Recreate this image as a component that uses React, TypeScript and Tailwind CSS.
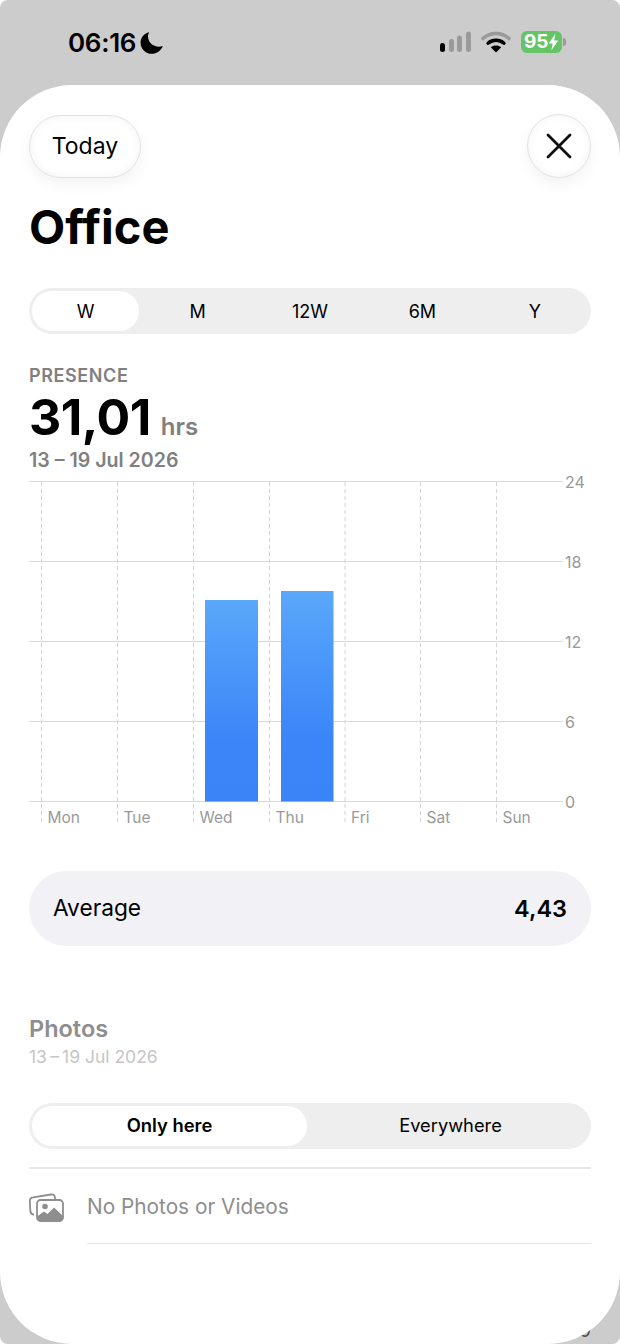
const ticks = [
  { y: 481.5, label: "24" },
  { y: 561.5, label: "18" },
  { y: 641.5, label: "12" },
  { y: 721.5, label: "6" },
  { y: 801.5, label: "0" },
];

const days = [
  { x: 41.5, label: "Mon" },
  { x: 117.5, label: "Tue" },
  { x: 193.5, label: "Wed" },
  { x: 269.5, label: "Thu" },
  { x: 345, label: "Fri" },
  { x: 420.5, label: "Sat" },
  { x: 496.5, label: "Sun" },
];

const ranges = ["W", "M", "12W", "6M", "Y"];

function StatusBar() {
  return (
    <div className="h-[85px] flex items-start justify-between pl-[68px] pr-[54px] pt-[27px]">
      <div className="flex items-center gap-[5px]">
        <span className="text-[26px] leading-[32px] font-semibold tracking-[-0.3px] text-black">06:16</span>
        <svg width="24" height="24" viewBox="0 0 24 24" className="-ml-[1px]">
          <path d="M9.2 1.2C3.9 2.4 0.6 6.6 0.6 11.7c0 6.2 5 11.1 11.2 11.1 4.9 0 9.2-3 11-7.8-1.2 0.5-2.5 0.7-3.9 0.7C12.900 15.700 8 11.200 8 5.600c0-1.600 0.400-3.100 1.200-4.400z" fill="#000" />
        </svg>
      </div>
      <div className="flex items-center gap-[10px] pt-[4px]">
        <svg width="32" height="22" viewBox="0 0 32 22">
          <rect x="1" y="12" width="5" height="9" rx="2.5" fill="#000" />
          <rect x="10" y="8" width="5" height="13" rx="2.5" fill="#9a9a9a" />
          <rect x="18" y="4.500" width="5" height="16.500" rx="2.5" fill="#9a9a9a" />
          <rect x="27" y="0.500" width="5" height="20.500" rx="2.5" fill="#9a9a9a" />
        </svg>
        <svg width="30" height="22" viewBox="0 0 30 22" fill="none">
          <path d="M2 7.500C9.500 0.800 20.500 0.800 28 7.500" stroke="#9a9a9a" strokeWidth="3.600" strokeLinecap="round" />
          <path d="M7 12.200C11.800 8.300 18.200 8.300 23 12.200" stroke="#000" strokeWidth="3.400" strokeLinecap="round" />
          <path d="M15 21.500L9.800 16.200C12.800 13.800 17.200 13.800 20.200 16.200z" fill="#000" />
        </svg>
        <div className="flex items-center gap-[1px]">
          <div className="w-[41px] h-[22px] rounded-[6px] bg-[#65c466] flex items-center pl-[3px] gap-0 overflow-hidden">
            <span className="text-[19px] leading-[22px] font-bold text-white tracking-[-0.2px]">95</span>
            <svg width="11" height="18" viewBox="0 0 11 18">
              <path d="M7.500 0.500L0.800 10.400h3.900L3.300 17.500 10.200 7.400H6.200z" fill="#fff" />
            </svg>
          </div>
          <div className="w-[3px] h-[8px] rounded-r-[3px] bg-[#9a9a9a]" />
        </div>
      </div>
    </div>
  );
}

function Chart() {
  return (
    <svg width="620" height="356" viewBox="0 470 620 356" className="block">
      <defs>
        <linearGradient id="bar" x1="0" y1="0" x2="0" y2="1">
          <stop offset="0" stopColor="#5aa7fb" />
          <stop offset="0.7" stopColor="#3b85f8" />
          <stop offset="1" stopColor="#3a84f8" />
        </linearGradient>
      </defs>
      {days.map((d) => (
        <line key={d.label} x1={d.x} x2={d.x} y1="482" y2="825" stroke="#d4d4d4" strokeWidth="1" strokeDasharray="4 3" />
      ))}
      {ticks.map((t) => (
        <g key={t.label}>
          <line x1="29" x2="563" y1={t.y} y2={t.y} stroke="#d9d9d9" strokeWidth="1.200" />
          <text x="565" y={t.y + 6} fontSize="16" fill="#999999" fontFamily="Inter, sans-serif">{t.label}</text>
        </g>
      ))}
      <rect x="205" y="600" width="53" height="201.500" fill="url(#bar)" />
      <rect x="281" y="591" width="52.500" height="210.500" fill="url(#bar)" />
      {days.map((d) => (
        <text key={d.label} x={d.x + 6} y="822.500" fontSize="15.500" fill="#999999" fontFamily="Inter, sans-serif">{d.label}</text>
      ))}
    </svg>
  );
}

export default function App() {
  return (
    <div className="relative h-[1344px] w-[620px] overflow-hidden rounded-[8px] bg-[#cccccc] font-['Inter',sans-serif] text-black">
      <div className="absolute right-[29px] bottom-[2px] text-[20px] leading-[24px] text-[#555555]">00</div>
      <StatusBar />

      <div className="relative h-[1259px] rounded-[72px] bg-white flex flex-col">
        <div className="flex items-center justify-between px-[29px] pt-[29px]">
          <button className="w-[112px] h-[63px] rounded-full bg-white border border-[#e3e3e3] shadow-[0_6px_14px_rgba(0,0,0,0.05),inset_0_0_10px_rgba(0,0,0,0.05)] text-[23px] pt-[1px] text-black">
            Today
          </button>
          <button className="w-[64px] h-[64px] rounded-full bg-white border border-[#e3e3e3] shadow-[0_6px_14px_rgba(0,0,0,0.05),inset_0_0_10px_rgba(0,0,0,0.05)] flex items-center justify-center">
            <svg width="26" height="26" viewBox="0 0 26 26" fill="none" stroke="#111" strokeWidth="2.800" strokeLinecap="round">
              <path d="M2 2L24 24M24 2L2 24" />
            </svg>
          </button>
        </div>

        <h1 className="mx-[29px] mt-[20px] text-[47px] leading-[57px] font-bold">Office</h1>

        <div className="mx-[29px] mt-[33px] h-[46px] rounded-full bg-[#eeeeee] flex">
          {ranges.map((r, i) => (
            <div key={r} className="flex-1 flex">
              <div
                className={`flex-1 my-[3px] ${i === 0 ? "ml-[3px] mr-[2px] bg-white" : ""} rounded-full flex items-center justify-center text-[18px]`}
              >
                {r}
              </div>
            </div>
          ))}
        </div>

        <div className="mx-[29px] mt-[31px] text-[18px] leading-[22px] font-semibold text-[#808080] tracking-[0.6px]">PRESENCE</div>
        <div className="mx-[29px] mt-[3px] flex items-baseline gap-[10px] h-[54px]">
          <span className="text-[50px] leading-[54px] font-bold tracking-[-0.5px]">31,01</span>
          <span className="text-[24px] leading-[30px] font-semibold text-[#808080]">hrs</span>
        </div>
        <div className="mx-[29px] mt-[4px] text-[19.6px] leading-[24px] font-semibold text-[#808080]">13 – 19 Jul 2026</div>

        <div className="-mt-[2px]">
          <Chart />
        </div>

        <div className="mx-[29px] mt-[45px] h-[75px] rounded-full bg-[#f1f1f6] flex items-center justify-between px-[24px]">
          <span className="text-[22.700px]">Average</span>
          <span className="text-[23.500px] font-semibold">4,43</span>
        </div>

        <div className="mx-[29px] mt-[68px] text-[23.500px] leading-[30px] font-semibold text-[#8e8e8e]">Photos</div>
        <div className="mx-[29px] mt-[2px] text-[17.500px] leading-[22px] text-[#c6c6c6]">13{"\u2009"}–{"\u2009"}19 Jul 2026</div>

        <div className="mx-[29px] mt-[35px] h-[46px] rounded-full bg-[#eeeeee] p-[3px] flex">
          <div className="w-[275px] rounded-full bg-white flex items-center justify-center text-[18.400px] font-semibold">Only here</div>
          <div className="flex-1 flex items-center justify-center pl-[6px] text-[18.300px]">Everywhere</div>
        </div>

        <div className="mx-[29px] mt-[18px] h-[1.500px] bg-[#e6e6e6]" />

        <div className="mx-[29px] h-[74px] pt-[3px] flex items-center gap-[23px]">
          <svg width="35" height="30" viewBox="0 0 35 30" fill="none">
            <path d="M5 22.500C2.500 22.500 1.700 21.500 1.400 19.500L0.800 9.500C0.600 7 1.800 5.700 4 5.400L22 2.500C24.300 2.200 25.700 3.200 26 5.500L26.200 7" stroke="#8e8e8e" strokeWidth="1.800" />
            <rect x="8" y="8" width="26" height="21" rx="3.500" stroke="#8e8e8e" strokeWidth="1.800" />
            <circle cx="16" cy="14.500" r="2.800" fill="#8e8e8e" />
            <path d="M8 24.500L15 19.500 18.500 22 25 15.500 34 24v2c0 2-1.500 3.500-3.500 3.500h-19C9.500 29.500 8 28 8 26z" fill="#8e8e8e" />
          </svg>
          <span className="text-[20.800px] text-[#8e8e8e]">No Photos or Videos</span>
        </div>

        <div className="ml-[87px] mr-[29px] h-[1.500px] bg-[#e6e6e6]" />
      </div>
    </div>
  );
}
